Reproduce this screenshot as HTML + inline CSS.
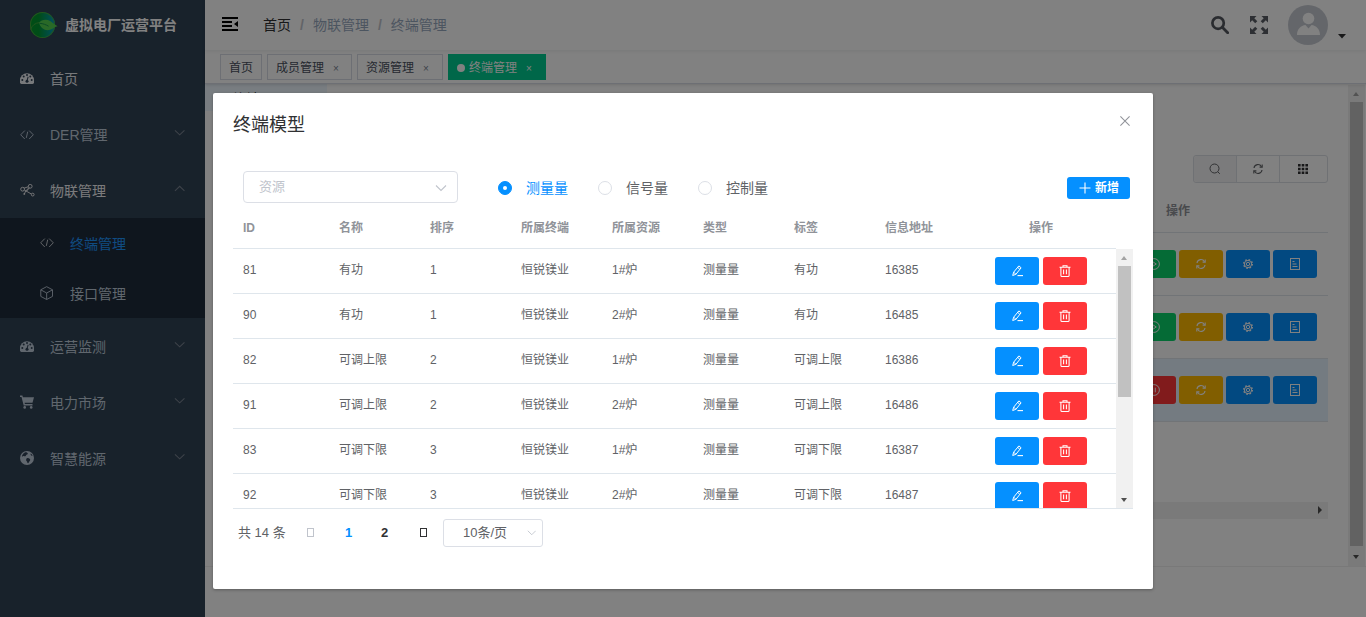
<!DOCTYPE html>
<html lang="zh-CN">
<head>
<meta charset="utf-8">
<title>虚拟电厂运营平台</title>
<style>
*{box-sizing:border-box;}
html,body{margin:0;padding:0;width:1366px;height:617px;overflow:hidden;background:#fff;}
body{font-family:"Liberation Sans","Noto Sans CJK SC",sans-serif;font-size:14px;color:#303133;position:relative;}
.abs{position:absolute;}
/* ---------- sidebar ---------- */
#sidebar{position:absolute;left:0;top:0;width:205px;height:617px;background:#304356;}
#logo{position:absolute;left:0;top:0;width:205px;height:50px;}
#logo svg{position:absolute;left:27px;top:10px;}
#logo .t{position:absolute;left:65px;top:0;line-height:50px;font-size:14px;font-weight:700;color:#fff;white-space:nowrap;letter-spacing:0;}
.mi{position:absolute;left:0;width:205px;height:56px;line-height:56px;color:#bfcbd9;font-size:14px;white-space:nowrap;}
.mi .tx{position:absolute;left:50px;top:1px;}
.mi svg.ic{position:absolute;left:20px;top:21px;}
.mi svg.ar{position:absolute;left:173.600px;top:20.800px;color:#7a8490;}
.sub{position:absolute;left:0;top:218px;width:205px;height:100px;background:#1f2d3d;}
.smi{position:absolute;left:0;width:205px;height:50px;line-height:50px;color:#bfcbd9;font-size:14px;white-space:nowrap;}
.smi .tx{position:absolute;left:70px;top:1px;}
.smi svg.ic{position:absolute;left:40px;top:18px;}
/* ---------- navbar ---------- */
#navbar{z-index:3;position:absolute;left:205px;top:0;width:1161px;height:50px;background:#fff;box-shadow:0 1px 4px rgba(0,21,41,.08);}
#bc{position:absolute;left:58px;top:0;line-height:50px;font-size:14px;white-space:nowrap;color:#97a8be;}
#bc b{font-weight:400;color:#303133;}
#bc i{font-style:normal;color:#c0c4cc;margin:0 9px;font-weight:700;}
/* ---------- tags ---------- */
#tags{z-index:2;position:absolute;left:205px;top:50px;width:1161px;height:34px;background:#fff;border-bottom:1px solid #d8dce5;box-shadow:0 1px 3px 0 rgba(0,0,0,.12),0 0 3px 0 rgba(0,0,0,.04);}
.tag{position:absolute;top:4px;height:26px;line-height:26px;border:1px solid #d8dce5;color:#495060;background:#fff;padding:0 8px;font-size:12px;white-space:nowrap;}
.tag .x{display:inline-block;width:14px;text-align:center;margin-left:5px;font-size:10px;color:#7d8594;}
.tag.on{background:#00cc90;border-color:#00cc90;color:#fff;}
.tag.on .x{color:#fff;}
.tag.on:before{content:"";display:inline-block;width:8px;height:8px;border-radius:50%;background:#fff;margin-right:4px;position:relative;top:0px;}
/* ---------- main ---------- */
#main{position:absolute;left:205px;top:84px;width:1161px;height:533px;background:#fff;}
/* ---------- overlay ---------- */
#mask{z-index:10;position:absolute;left:0;top:0;width:1366px;height:617px;background:rgba(0,0,0,.495);}
/* ---------- dialog ---------- */
#dlg{z-index:11;position:absolute;left:213px;top:93px;width:940px;height:496px;background:#fff;border-radius:2px;box-shadow:0 1px 3px rgba(0,0,0,.3);}

#dlg .title{position:absolute;left:20px;top:20px;line-height:24px;font-size:18px;color:#303133;white-space:nowrap;}
#dlg .close{position:absolute;left:906px;top:22px;}
.sel{position:absolute;left:30px;top:78px;width:215px;height:32px;border:1px solid #dcdfe6;border-radius:4px;background:#fff;font-size:13px;color:#c0c4cc;line-height:30px;padding-left:15px;}
.sel svg{position:absolute;right:10px;top:10px;}
.radio{position:absolute;top:87px;height:16px;line-height:16px;font-size:14px;color:#606266;white-space:nowrap;}
.radio i{position:absolute;left:0;top:1px;width:14px;height:14px;border:1px solid #dcdfe6;border-radius:50%;background:#fff;}
.radio.on i{border-color:#0590ff;background:#0590ff;}
.radio.on i:after{content:"";position:absolute;left:4px;top:4px;width:4px;height:4px;border-radius:50%;background:#fff;}
.radio.on{color:#0590ff;}
.radio span{position:absolute;left:28px;top:0;}
.add{position:absolute;left:854px;top:84px;width:63px;height:22px;border-radius:3px;background:#0590ff;color:#fff;font-size:12px;font-weight:700;line-height:22px;white-space:nowrap;}
.add svg{position:absolute;left:12px;top:5px;}
.add span{position:absolute;left:28px;top:0;}
.thead{position:absolute;left:20px;top:114px;width:883px;height:42px;border-bottom:1px solid #dfe6ec;font-size:12px;font-weight:700;color:#909399;}
.thead span{position:absolute;top:0;line-height:43px;white-space:nowrap;}
.tbody{position:absolute;left:20px;top:156px;width:900px;height:260px;overflow:hidden;border-bottom:1px solid #dfe6ec;}
.tr{position:absolute;left:0;width:883px;height:45px;border-bottom:1px solid #dfe6ec;font-size:12px;color:#606266;}
.tr .c{position:absolute;top:0;line-height:43px;white-space:nowrap;}
.btn{position:absolute;top:8px;width:44px;height:28px;border-radius:3px;}
.btn svg{position:absolute;left:16px;top:8px;}
.be{left:762px;background:#0590ff;}
.bd{left:810px;background:#ff3639;}
.vsb{position:absolute;left:883px;top:0;width:17px;height:259px;background:#f1f1f1;}
.vsb .th{position:absolute;left:2px;top:17px;width:13px;height:131px;background:#c1c1c1;}
.vsb .up{position:absolute;left:4.800px;top:7px;width:0;height:0;border:3.700px solid transparent;border-top:0;border-bottom:4px solid #a3a3a3;}
.vsb .dn{position:absolute;left:4.800px;top:248.500px;width:0;height:0;border:3.700px solid transparent;border-bottom:0;border-top:4px solid #505050;}
.pg{position:absolute;left:0;top:426px;height:28px;line-height:28px;font-size:13px;color:#606266;white-space:nowrap;}
.pg span{position:absolute;top:0;}
.pg .box{position:absolute;top:9px;width:7px;height:9px;border:1px solid #c0c4cc;}
.psel{position:absolute;left:230px;top:426px;width:100px;height:28px;border:1px solid #dcdfe6;border-radius:3px;font-size:13px;color:#606266;line-height:26px;}
.psel span{position:absolute;left:19px;top:0;}
.psel svg{position:absolute;left:82.500px;top:7.800px;width:9.500px;height:9.500px;}

#main .blue{position:absolute;left:0;top:0;width:122px;height:27px;background:#eef7ff;}
#main .bt{position:absolute;left:27px;top:5px;font-size:14px;color:#303133;line-height:20px;white-space:nowrap;}
#main .hline{position:absolute;left:0;top:482px;width:1161px;height:1px;background:#f0f0f0;}
.tb{position:absolute;left:988px;top:71px;width:135px;height:28px;border:1px solid #dcdfe6;border-radius:3px;background:#fff;}
.tb i{position:absolute;top:0;height:26px;width:1px;background:#dcdfe6;}
.tb b{position:absolute;left:0;top:0;width:42px;height:26px;background:#f4f4f5;border-radius:3px 0 0 3px;}
.tb svg{position:absolute;top:7px;}
.bh{position:absolute;left:961px;top:115px;font-size:12px;font-weight:700;color:#909399;line-height:24px;white-space:nowrap;}
.bl{position:absolute;left:900px;width:223px;height:1px;background:#dfe6ec;}
.hl{position:absolute;left:900px;top:275px;width:223px;height:62px;background:#e6f3ff;}
.bb{position:absolute;width:44px;height:28px;border-radius:3px;}
.bb svg{position:absolute;left:16px;top:8px;}
.g{background:#0bd46b;left:927px}.o{background:#ffba00;left:974px}.bl1{background:#0590ff;left:1021px}.bl2{background:#0590ff;left:1068px}.r{background:#ff3639;left:927px}
.hsb{position:absolute;left:900px;top:418px;width:223px;height:17px;background:#f1f1f1;}
.hsb:after{content:"";position:absolute;left:213px;top:4px;border:4.5px solid transparent;border-right:0;border-left:4px solid #505050;}
.mvsb{position:absolute;left:1143px;top:1px;width:17px;height:481px;background:#f1f1f1;}
.mvsb .th{position:absolute;left:2px;top:17px;width:13px;height:444px;background:#c1c1c1;}
.mvsb .up{position:absolute;left:4.800px;top:6.700px;width:0;height:0;border:3.700px solid transparent;border-top:0;border-bottom:4.300px solid #a3a3a3;}
.mvsb .dn{position:absolute;left:4.800px;top:469.800px;width:0;height:0;border:3.700px solid transparent;border-bottom:0;border-top:4.200px solid #505050;}
</style>
</head>
<body>
<div id="sidebar">
  <div id="logo">
    <div style="position:absolute;left:29.500px;top:12px;width:25.500px;height:25.500px;border-radius:50%;background:linear-gradient(90deg,#009a2c 0%,#00962f 35%,#009a86 75%,#009ec8 100%);box-shadow:inset 0 0 0 1px #46a83a;"></div><svg width="32" height="30" viewBox="0 0 32 30" style="left:27px;top:10px"><path d="M3.600 19.500A10.400 10.400 0 0 1 12.500 12.600" fill="none" stroke="#46a83a" stroke-width="1"/><path d="M12 12.800c2.500-3.400 7.500-4 11.500-1.600 2.300 1.400 4.300 3.400 7.100 5.100-2.600.4-4.600 2.600-7.600 3.500-4.500 1.400-9.200-1.200-11-7z" fill="#52d04e"/><path d="M12.600 13.300c3.500.2 6.500 1.500 9 2.900" stroke="#0f8a4a" stroke-width=".9" fill="none"/></svg>
    <span class="t">虚拟电厂运营平台</span>
  </div>
  <div class="mi" style="top:50px;color:#eceff3"><svg class="ic" style="top:23px" width="14" height="11" viewBox="0 0 14 11"><path d="M0 7.200A7 7 0 0 1 14 7.200V9.600Q14 11 12.600 11H1.400Q0 11 0 9.600z" fill="currentColor"/><g fill="#304356"><circle cx="2.300" cy="6.900" r="1"/><circle cx="3.700" cy="3.500" r="1"/><circle cx="7" cy="2.100" r="1"/><circle cx="10.300" cy="3.500" r="1"/><circle cx="11.700" cy="6.900" r="1"/><circle cx="7" cy="8.300" r="1.500"/><path d="M6.400 8L7.700 3.600l.9.300-1.100 4.400z"/></g></svg><span class="tx">首页</span></div>
  <div class="mi" style="top:106px"><svg class="ic" style="top:23.500px" width="14" height="10" viewBox="0 0 14 10"><path d="M4.800 0.600L0.700 4.800 4.800 9M9.200 0.600L13.300 4.800 9.200 9M7.700 1.700L6.300 7.900" fill="none" stroke="currentColor" stroke-width="0.950"/></svg><span class="tx">DER管理</span><svg class="ar" width="11.400" height="11.400" viewBox="0 0 12 12"><path d="M1 3.500l5 4.800 5-4.800" fill="none" stroke="currentColor" stroke-width="1.1"/></svg></div>
  <div class="mi" style="top:162px;color:#f4f4f5"><svg class="ic" style="top:22px" width="15" height="13" viewBox="0 0 15 13"><g fill="none" stroke="currentColor" stroke-width="0.9"><circle cx="2.6" cy="5.2" r="1.9"/><circle cx="10.2" cy="2.3" r="1.9"/><circle cx="12.7" cy="10.6" r="1.4"/><path d="M4.3 6l7.1 4M5.6 7.2L8.9 3.7M4 4.2l4.4-1.5M5.6 7L4.6 9.6M9.3 4l-3 3.5"/></g><circle cx="4.3" cy="9.9" r="0.9" fill="currentColor"/></svg><span class="tx">物联管理</span><svg class="ar" width="11.400" height="11.400" viewBox="0 0 12 12"><path d="M1 8.300l5-4.800 5 4.800" fill="none" stroke="currentColor" stroke-width="1.1"/></svg></div>
  <div class="sub">
    <div class="smi" style="top:0;color:#1f96ff"><span style="color:#c8ccd2"><svg class="ic" style="top:20.200px" width="14" height="10" viewBox="0 0 14 10"><path d="M4.800 0.600L0.700 4.800 4.800 9M9.200 0.600L13.300 4.800 9.200 9M7.700 1.700L6.300 7.900" fill="none" stroke="currentColor" stroke-width="0.950"/></svg></span><span class="tx">终端管理</span></div>
    <div class="smi" style="top:50px"><svg class="ic" style="top:17.800px;left:40.200px" width="13.300" height="14.200" viewBox="0 0 14 15"><path d="M7 0.7L13.2 4v7L7 14.3 0.8 11V4zM0.9 4.1L7 7.4l6.1-3.3M7 7.4v6.8" fill="none" stroke="currentColor" stroke-width="0.95"/></svg><span class="tx">接口管理</span></div>
  </div>
  <div class="mi" style="top:318px"><svg class="ic" style="top:23px" width="14" height="11" viewBox="0 0 14 11"><path d="M0 7.200A7 7 0 0 1 14 7.200V9.600Q14 11 12.600 11H1.400Q0 11 0 9.600z" fill="currentColor"/><g fill="#304356"><circle cx="2.300" cy="6.900" r="1"/><circle cx="3.700" cy="3.500" r="1"/><circle cx="7" cy="2.100" r="1"/><circle cx="10.300" cy="3.500" r="1"/><circle cx="11.700" cy="6.900" r="1"/><circle cx="7" cy="8.300" r="1.500"/><path d="M6.400 8L7.700 3.600l.9.300-1.100 4.400z"/></g></svg><span class="tx">运营监测</span><svg class="ar" width="11.400" height="11.400" viewBox="0 0 12 12"><path d="M1 3.500l5 4.800 5-4.800" fill="none" stroke="currentColor" stroke-width="1.1"/></svg></div>
  <div class="mi" style="top:374px"><svg class="ic" style="top:21px" width="14" height="14" viewBox="0 0 14 14"><path d="M0 0.6h2.4l.5 1.6H14l-1.5 5.6H4.6l.3 1.3h7.6v1.3H3.7L1.5 1.9H0z" fill="currentColor"/><circle cx="4.7" cy="12.4" r="1.3" fill="currentColor"/><circle cx="11.2" cy="12.4" r="1.3" fill="currentColor"/></svg><span class="tx">电力市场</span><svg class="ar" width="11.400" height="11.400" viewBox="0 0 12 12"><path d="M1 3.500l5 4.800 5-4.800" fill="none" stroke="currentColor" stroke-width="1.1"/></svg></div>
  <div class="mi" style="top:430px"><svg class="ic" style="top:21px" width="14" height="14" viewBox="0 0 14 14"><circle cx="7" cy="7" r="7" fill="currentColor"/><path d="M5.2 1.2c1.2-.1 2.3.5 2.6 1.2.2.7-.6 1-1.3 1.4-.8.5-.3 1.300-1.200 1.500-.8.200-1.100-.400-1.900-.200-.6.200-1 .8-1.500.5C2 4 3.600 1.600 5.200 1.200zM7 7.200c.9-.3 2.200.1 2.900.9.600.7.200 1.600-.4 2.200-.5.600-.6 1.500-1.300 1.900-.6.300-1-.4-1-1.100 0-.7-.8-1-1-1.700-.2-.9.100-1.900.8-2.200zM10.800 2.600c.8.500 1.500 1.500 1.800 2.500-.5-.2-1-.1-1.400-.500-.5-.5-.9-1.400-.4-2z" fill="#304156"/></svg><span class="tx">智慧能源</span><svg class="ar" width="11.400" height="11.400" viewBox="0 0 12 12"><path d="M1 3.500l5 4.800 5-4.800" fill="none" stroke="currentColor" stroke-width="1.1"/></svg></div>
</div>
<div id="navbar">
  <svg style="position:absolute;left:17px;top:17px" width="16" height="14" viewBox="0 0 16 14"><path d="M0 0h16v2H0zM0 4h10v2H0zM0 8h10v2H0zM0 12h16v2H0zM16 4v6l-4-3z" fill="#000"/></svg>
  <div id="bc"><b>首页</b><i>/</i>物联管理<i>/</i>终端管理</div>
  <svg style="position:absolute;left:1006px;top:16px" width="18" height="18" viewBox="0 0 18 18"><circle cx="7.100" cy="7.100" r="5.700" fill="none" stroke="#54585f" stroke-width="2.700"/><path d="M11.300 11.300l5.400 5.400" stroke="#54585f" stroke-width="2.800" stroke-linecap="round"/></svg>
  <svg style="position:absolute;left:1045px;top:16px" width="18" height="18" viewBox="0 0 18 18"><path d="M0 0h6.500L4.300 2.200 7.300 5.200 5.200 7.300 2.200 4.300 0 6.500zM18 0v6.500L15.800 4.300 12.800 7.300 10.700 5.200 13.700 2.200 11.500 0zM0 18v-6.500L2.200 13.700 5.200 10.700 7.300 12.800 4.300 15.800 6.500 18zM18 18h-6.500L13.700 15.800 10.700 12.800 12.800 10.700 15.800 13.700 18 11.500z" fill="#5a5e66"/></svg>
  <svg style="position:absolute;left:1083px;top:5px" width="40" height="40" viewBox="0 0 40 40"><circle cx="20" cy="20" r="20" fill="#c6cad2"/><circle cx="20.500" cy="13.500" r="5.800" fill="#fff"/><path d="M9 30c0-6 4-9.500 8.500-10l3 3.500 3-3.500c4.500.5 8.500 4 8.500 10z" fill="#fff"/></svg>
  <svg style="position:absolute;left:1133px;top:34px" width="8" height="5" viewBox="0 0 8 5"><path d="M0 0h8L4 4.500z" fill="#303133"/></svg>
</div>
<div id="tags">
  <span class="tag" style="left:15px">首页</span>
  <span class="tag" style="left:62px">成员管理<span class="x">×</span></span>
  <span class="tag" style="left:152px;padding-right:9px">资源管理<span class="x">×</span></span>
  <span class="tag on" style="left:243px;padding-right:9px">终端管理<span class="x">×</span></span>
</div>
<div id="main">
  <div class="blue"></div><div class="bt">终端</div>
  <div class="tb"><b></b><i style="left:42px"></i><i style="left:85px"></i>
    <svg style="left:15px" width="12" height="12" viewBox="0 0 12 12"><circle cx="5.5" cy="5.5" r="4.5" fill="none" stroke="#606266" stroke-width="1"/><path d="M8.8 8.8l2 2" stroke="#606266" stroke-width="1"/></svg>
    <svg style="left:58px" width="12" height="12" viewBox="0 0 12 12"><path d="M2 5a4 4 0 0 1 7.5-1.3M10 7a4 4 0 0 1-7.5 1.3" fill="none" stroke="#606266" stroke-width="1.1"/><path d="M10.2 1.5v2.6H7.6M1.8 10.5V7.9h2.6" fill="none" stroke="#606266" stroke-width="1.1"/></svg>
    <svg style="left:104px;top:8px" width="10" height="10" viewBox="0 0 10 10"><path d="M0 0h2.6v2.6H0zM3.7 0h2.6v2.6H3.7zM7.4 0H10v2.6H7.4zM0 3.7h2.6v2.6H0zM3.7 3.7h2.6v2.6H3.7zM7.4 3.7H10v2.6H7.4zM0 7.4h2.6V10H0zM3.7 7.4h2.6V10H3.7zM7.4 7.4H10V10H7.4z" fill="#303133"/></svg>
  </div>
  <div class="bh">操作</div>
  <div class="bl" style="top:148px"></div>
  <div class="bl" style="top:211px"></div>
  <div class="hl"></div>
  <div class="bl" style="top:274px"></div>
  <div class="bl" style="top:337px"></div>
  <span class="bb g" style="top:166px"><svg width="12" height="12" viewBox="0 0 12 12"><circle cx="6" cy="6" r="5.4" fill="none" stroke="#fff" stroke-width="1"/><path d="M4.7 3.7L8.3 6 4.7 8.3z" fill="none" stroke="#fff" stroke-width="1"/></svg></span><span class="bb o" style="top:166px"><svg width="12" height="12" viewBox="0 0 12 12"><path d="M2 5a4 4 0 0 1 7.5-1.3M10 7a4 4 0 0 1-7.5 1.3" fill="none" stroke="#fff" stroke-width="1.1"/><path d="M10.2 1.5v2.6H7.6M1.8 10.5V7.9h2.6" fill="none" stroke="#fff" stroke-width="1.1"/></svg></span><span class="bb bl1" style="top:166px"><svg width="12" height="12" viewBox="0 0 12 12"><circle cx="6" cy="6" r="4.2" fill="none" stroke="#fff" stroke-width="1.6" stroke-dasharray="1.6 1.7"/><circle cx="6" cy="6" r="3.6" fill="none" stroke="#fff" stroke-width="1"/><circle cx="6" cy="6" r="1.7" fill="none" stroke="#fff" stroke-width="1"/></svg></span><span class="bb bl2" style="top:166px"><svg width="12" height="12" viewBox="0 0 12 12"><rect x="1.5" y="0.5" width="9" height="11" fill="none" stroke="#fff" stroke-width="1"/><path d="M3.5 6h4M3.5 8.5h5M3.5 3.5h2" stroke="#fff" stroke-width="1" fill="none"/></svg></span><span class="bb g" style="top:229px"><svg width="12" height="12" viewBox="0 0 12 12"><circle cx="6" cy="6" r="5.4" fill="none" stroke="#fff" stroke-width="1"/><path d="M4.7 3.7L8.3 6 4.7 8.3z" fill="none" stroke="#fff" stroke-width="1"/></svg></span><span class="bb o" style="top:229px"><svg width="12" height="12" viewBox="0 0 12 12"><path d="M2 5a4 4 0 0 1 7.5-1.3M10 7a4 4 0 0 1-7.5 1.3" fill="none" stroke="#fff" stroke-width="1.1"/><path d="M10.2 1.5v2.6H7.6M1.8 10.5V7.9h2.6" fill="none" stroke="#fff" stroke-width="1.1"/></svg></span><span class="bb bl1" style="top:229px"><svg width="12" height="12" viewBox="0 0 12 12"><circle cx="6" cy="6" r="4.2" fill="none" stroke="#fff" stroke-width="1.6" stroke-dasharray="1.6 1.7"/><circle cx="6" cy="6" r="3.6" fill="none" stroke="#fff" stroke-width="1"/><circle cx="6" cy="6" r="1.7" fill="none" stroke="#fff" stroke-width="1"/></svg></span><span class="bb bl2" style="top:229px"><svg width="12" height="12" viewBox="0 0 12 12"><rect x="1.5" y="0.5" width="9" height="11" fill="none" stroke="#fff" stroke-width="1"/><path d="M3.5 6h4M3.5 8.5h5M3.5 3.5h2" stroke="#fff" stroke-width="1" fill="none"/></svg></span><span class="bb r" style="top:292px"><svg width="12" height="12" viewBox="0 0 12 12"><circle cx="6" cy="6" r="5.4" fill="none" stroke="#fff" stroke-width="1"/><path d="M4.7 3.7v4.6M7.3 3.7v4.6" fill="none" stroke="#fff" stroke-width="1"/></svg></span><span class="bb o" style="top:292px"><svg width="12" height="12" viewBox="0 0 12 12"><path d="M2 5a4 4 0 0 1 7.5-1.3M10 7a4 4 0 0 1-7.5 1.3" fill="none" stroke="#fff" stroke-width="1.1"/><path d="M10.2 1.5v2.6H7.6M1.8 10.5V7.9h2.6" fill="none" stroke="#fff" stroke-width="1.1"/></svg></span><span class="bb bl1" style="top:292px"><svg width="12" height="12" viewBox="0 0 12 12"><circle cx="6" cy="6" r="4.2" fill="none" stroke="#fff" stroke-width="1.6" stroke-dasharray="1.6 1.7"/><circle cx="6" cy="6" r="3.6" fill="none" stroke="#fff" stroke-width="1"/><circle cx="6" cy="6" r="1.7" fill="none" stroke="#fff" stroke-width="1"/></svg></span><span class="bb bl2" style="top:292px"><svg width="12" height="12" viewBox="0 0 12 12"><rect x="1.5" y="0.5" width="9" height="11" fill="none" stroke="#fff" stroke-width="1"/><path d="M3.5 6h4M3.5 8.5h5M3.5 3.5h2" stroke="#fff" stroke-width="1" fill="none"/></svg></span>
  <div class="hsb"></div>
  <div class="hline"></div>
  <div class="mvsb"><div class="up"></div><div class="th"></div><div class="dn"></div></div>
</div>
<div id="mask"></div>
<div id="dlg">
  <div class="title">终端模型</div>
  <svg class="close" width="12" height="12" viewBox="0 0 12 12"><path d="M1.400 1.400l9.200 9.200M10.600 1.400L1.400 10.600" stroke="#909399" stroke-width="1.050" fill="none"/></svg>
  <div class="sel">资源<svg width="12" height="12" viewBox="0 0 12 12"><path d="M1 3.5l5 5 5-5" fill="none" stroke="#c0c4cc" stroke-width="1.1"/></svg></div>
  <div class="radio on" style="left:285px"><i></i><span>测量量</span></div>
  <div class="radio" style="left:385px"><i></i><span>信号量</span></div>
  <div class="radio" style="left:485px"><i></i><span>控制量</span></div>
  <div class="add"><svg width="12" height="12" viewBox="0 0 12 12"><path d="M6 0.5v11M0.5 6h11" stroke="#fff" stroke-width="1.1" fill="none"/></svg><span>新增</span></div>
  <div class="thead"><span style="left:10px">ID</span><span style="left:106px">名称</span><span style="left:197px">排序</span><span style="left:288px">所属终端</span><span style="left:379px">所属资源</span><span style="left:470px">类型</span><span style="left:561px">标签</span><span style="left:652px">信息地址</span><span style="left:796px">操作</span></div>
  <div class="tbody">
<div class="tr" style="top:0px"><span class="c" style="left:10px">81</span><span class="c" style="left:106px">有功</span><span class="c" style="left:197px">1</span><span class="c" style="left:288px">恒锐镁业</span><span class="c" style="left:379px">1#炉</span><span class="c" style="left:470px">测量量</span><span class="c" style="left:561px">有功</span><span class="c" style="left:652px">16385</span><span class="btn be"><svg width="12" height="12" viewBox="0 0 12 12"><path d="M1.700 10.500L2.700 7.100 7.900 0.900 10.100 2.800 4.900 9.300zM2.700 7.100L4.900 9.300M6.700 2.400L8.800 4.300" fill="none" stroke="#fff" stroke-width="1" stroke-linejoin="round"/><path d="M6.500 10.600H12" stroke="#fff" stroke-width="1.100"/></svg></span><span class="btn bd"><svg width="12" height="12" viewBox="0 0 12 12"><path d="M4 2.200V0.800h4v1.400M0.500 2.300h11M1.900 2.300v8.200q0 1 1 1h6.200q1 0 1-1V2.300M4.600 4.600v4.600M7.400 4.600v4.600" fill="none" stroke="#fff" stroke-width="1.050"/></svg></span></div>
<div class="tr" style="top:45px"><span class="c" style="left:10px">90</span><span class="c" style="left:106px">有功</span><span class="c" style="left:197px">1</span><span class="c" style="left:288px">恒锐镁业</span><span class="c" style="left:379px">2#炉</span><span class="c" style="left:470px">测量量</span><span class="c" style="left:561px">有功</span><span class="c" style="left:652px">16485</span><span class="btn be"><svg width="12" height="12" viewBox="0 0 12 12"><path d="M1.700 10.500L2.700 7.100 7.900 0.900 10.100 2.800 4.900 9.300zM2.700 7.100L4.900 9.300M6.700 2.400L8.800 4.300" fill="none" stroke="#fff" stroke-width="1" stroke-linejoin="round"/><path d="M6.500 10.600H12" stroke="#fff" stroke-width="1.100"/></svg></span><span class="btn bd"><svg width="12" height="12" viewBox="0 0 12 12"><path d="M4 2.200V0.800h4v1.400M0.500 2.300h11M1.900 2.300v8.200q0 1 1 1h6.200q1 0 1-1V2.300M4.600 4.600v4.600M7.400 4.600v4.600" fill="none" stroke="#fff" stroke-width="1.050"/></svg></span></div>
<div class="tr" style="top:90px"><span class="c" style="left:10px">82</span><span class="c" style="left:106px">可调上限</span><span class="c" style="left:197px">2</span><span class="c" style="left:288px">恒锐镁业</span><span class="c" style="left:379px">1#炉</span><span class="c" style="left:470px">测量量</span><span class="c" style="left:561px">可调上限</span><span class="c" style="left:652px">16386</span><span class="btn be"><svg width="12" height="12" viewBox="0 0 12 12"><path d="M1.700 10.500L2.700 7.100 7.900 0.900 10.100 2.800 4.900 9.300zM2.700 7.100L4.900 9.300M6.700 2.400L8.800 4.300" fill="none" stroke="#fff" stroke-width="1" stroke-linejoin="round"/><path d="M6.500 10.600H12" stroke="#fff" stroke-width="1.100"/></svg></span><span class="btn bd"><svg width="12" height="12" viewBox="0 0 12 12"><path d="M4 2.200V0.800h4v1.400M0.500 2.300h11M1.900 2.300v8.200q0 1 1 1h6.200q1 0 1-1V2.300M4.600 4.600v4.600M7.400 4.600v4.600" fill="none" stroke="#fff" stroke-width="1.050"/></svg></span></div>
<div class="tr" style="top:135px"><span class="c" style="left:10px">91</span><span class="c" style="left:106px">可调上限</span><span class="c" style="left:197px">2</span><span class="c" style="left:288px">恒锐镁业</span><span class="c" style="left:379px">2#炉</span><span class="c" style="left:470px">测量量</span><span class="c" style="left:561px">可调上限</span><span class="c" style="left:652px">16486</span><span class="btn be"><svg width="12" height="12" viewBox="0 0 12 12"><path d="M1.700 10.500L2.700 7.100 7.900 0.900 10.100 2.800 4.900 9.300zM2.700 7.100L4.900 9.300M6.700 2.400L8.800 4.300" fill="none" stroke="#fff" stroke-width="1" stroke-linejoin="round"/><path d="M6.500 10.600H12" stroke="#fff" stroke-width="1.100"/></svg></span><span class="btn bd"><svg width="12" height="12" viewBox="0 0 12 12"><path d="M4 2.200V0.800h4v1.400M0.500 2.300h11M1.900 2.300v8.200q0 1 1 1h6.200q1 0 1-1V2.300M4.600 4.600v4.600M7.400 4.600v4.600" fill="none" stroke="#fff" stroke-width="1.050"/></svg></span></div>
<div class="tr" style="top:180px"><span class="c" style="left:10px">83</span><span class="c" style="left:106px">可调下限</span><span class="c" style="left:197px">3</span><span class="c" style="left:288px">恒锐镁业</span><span class="c" style="left:379px">1#炉</span><span class="c" style="left:470px">测量量</span><span class="c" style="left:561px">可调下限</span><span class="c" style="left:652px">16387</span><span class="btn be"><svg width="12" height="12" viewBox="0 0 12 12"><path d="M1.700 10.500L2.700 7.100 7.900 0.900 10.100 2.800 4.900 9.300zM2.700 7.100L4.900 9.300M6.700 2.400L8.800 4.300" fill="none" stroke="#fff" stroke-width="1" stroke-linejoin="round"/><path d="M6.500 10.600H12" stroke="#fff" stroke-width="1.100"/></svg></span><span class="btn bd"><svg width="12" height="12" viewBox="0 0 12 12"><path d="M4 2.200V0.800h4v1.400M0.500 2.300h11M1.900 2.300v8.200q0 1 1 1h6.200q1 0 1-1V2.300M4.600 4.600v4.600M7.400 4.600v4.600" fill="none" stroke="#fff" stroke-width="1.050"/></svg></span></div>
<div class="tr" style="top:225px"><span class="c" style="left:10px">92</span><span class="c" style="left:106px">可调下限</span><span class="c" style="left:197px">3</span><span class="c" style="left:288px">恒锐镁业</span><span class="c" style="left:379px">2#炉</span><span class="c" style="left:470px">测量量</span><span class="c" style="left:561px">可调下限</span><span class="c" style="left:652px">16487</span><span class="btn be"><svg width="12" height="12" viewBox="0 0 12 12"><path d="M1.700 10.500L2.700 7.100 7.900 0.900 10.100 2.800 4.900 9.300zM2.700 7.100L4.900 9.300M6.700 2.400L8.800 4.300" fill="none" stroke="#fff" stroke-width="1" stroke-linejoin="round"/><path d="M6.500 10.600H12" stroke="#fff" stroke-width="1.100"/></svg></span><span class="btn bd"><svg width="12" height="12" viewBox="0 0 12 12"><path d="M4 2.200V0.800h4v1.400M0.500 2.300h11M1.900 2.300v8.200q0 1 1 1h6.200q1 0 1-1V2.300M4.600 4.600v4.600M7.400 4.600v4.600" fill="none" stroke="#fff" stroke-width="1.050"/></svg></span></div>
<div class="tr" style="top:270px"><span class="c" style="left:10px">84</span><span class="c" style="left:106px">无功</span><span class="c" style="left:197px">4</span><span class="c" style="left:288px">恒锐镁业</span><span class="c" style="left:379px">1#炉</span><span class="c" style="left:470px">测量量</span><span class="c" style="left:561px">无功</span><span class="c" style="left:652px">16388</span><span class="btn be"><svg width="12" height="12" viewBox="0 0 12 12"><path d="M1.700 10.500L2.700 7.100 7.900 0.900 10.100 2.800 4.900 9.300zM2.700 7.100L4.900 9.300M6.700 2.400L8.800 4.300" fill="none" stroke="#fff" stroke-width="1" stroke-linejoin="round"/><path d="M6.500 10.600H12" stroke="#fff" stroke-width="1.100"/></svg></span><span class="btn bd"><svg width="12" height="12" viewBox="0 0 12 12"><path d="M4 2.200V0.800h4v1.400M0.500 2.300h11M1.900 2.300v8.200q0 1 1 1h6.200q1 0 1-1V2.300M4.600 4.600v4.600M7.400 4.600v4.600" fill="none" stroke="#fff" stroke-width="1.050"/></svg></span></div>
    <div class="vsb"><div class="up"></div><div class="th"></div><div class="dn"></div></div>
  </div>
  <div class="pg"><span style="left:25px">共 14 条</span><i class="box" style="left:94px"></i><span style="left:132px;color:#0590ff;font-weight:700">1</span><span style="left:168px;color:#303133;font-weight:700">2</span><i class="box" style="left:207px;border-color:#303133"></i></div>
  <div class="psel"><span>10条/页</span><svg width="12" height="12" viewBox="0 0 12 12"><path d="M1 3.5l5 5 5-5" fill="none" stroke="#c0c4cc" stroke-width="1.1"/></svg></div>
</div>
</body>
</html>
